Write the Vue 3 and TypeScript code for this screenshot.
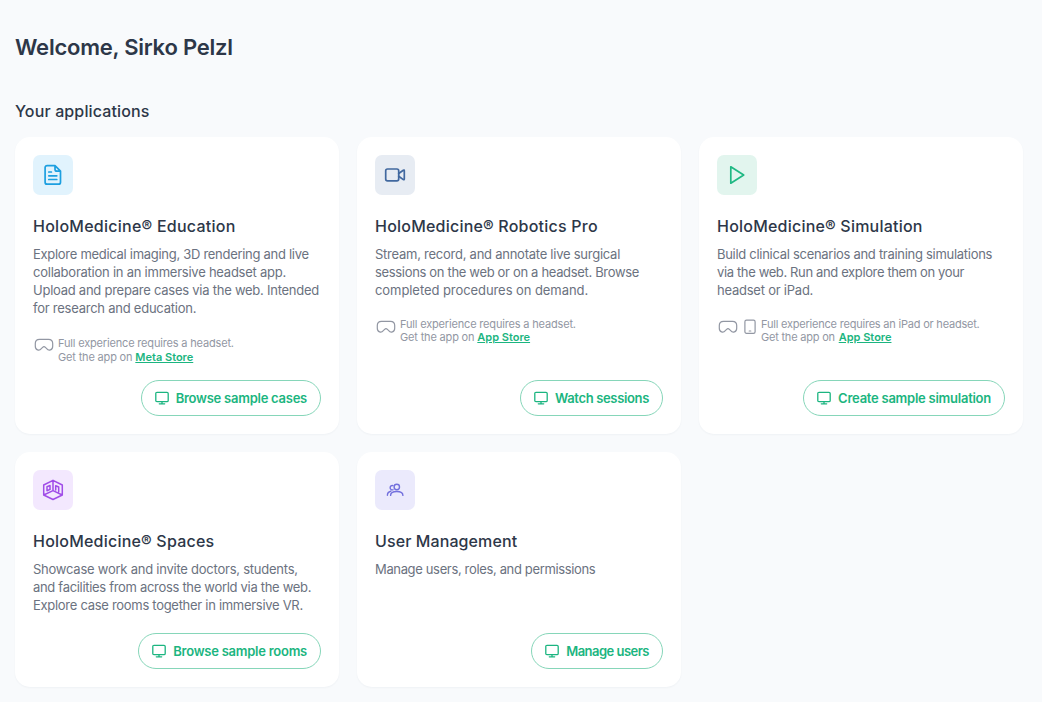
<script setup lang="ts">
type IconName = 'document' | 'video' | 'play' | 'spaces' | 'users'

interface Line {
  text: string
  tracking: number
}

interface AppCard {
  id: string
  icon: IconName
  title: string
  lines: Line[]
  note?: { text: string; store: string; tablet: boolean }
  action: string
}

const cards: AppCard[] = [
  {
    id: 'education',
    icon: 'document',
    title: 'HoloMedicine® Education',
    lines: [
      { text: 'Explore medical imaging, 3D rendering and live', tracking: -0.29 },
      { text: 'collaboration in an immersive headset app.', tracking: -0.24 },
      { text: 'Upload and prepare cases via the web. Intended', tracking: -0.25 },
      { text: 'for research and education.', tracking: -0.24 },
    ],
    note: { text: 'Full experience requires a headset.', store: 'Meta Store', tablet: false },
    action: 'Browse sample cases',
  },
  {
    id: 'robotics',
    icon: 'video',
    title: 'HoloMedicine® Robotics Pro',
    lines: [
      { text: 'Stream, record, and annotate live surgical', tracking: -0.25 },
      { text: 'sessions on the web or on a headset. Browse', tracking: -0.33 },
      { text: 'completed procedures on demand.', tracking: -0.07 },
    ],
    note: { text: 'Full experience requires a headset.', store: 'App Store', tablet: false },
    action: 'Watch sessions',
  },
  {
    id: 'simulation',
    icon: 'play',
    title: 'HoloMedicine® Simulation',
    lines: [
      { text: 'Build clinical scenarios and training simulations', tracking: -0.29 },
      { text: 'via the web. Run and explore them on your', tracking: -0.37 },
      { text: 'headset or iPad.', tracking: -0.23 },
    ],
    note: { text: 'Full experience requires an iPad or headset.', store: 'App Store', tablet: true },
    action: 'Create sample simulation',
  },
  {
    id: 'spaces',
    icon: 'spaces',
    title: 'HoloMedicine® Spaces',
    lines: [
      { text: 'Showcase work and invite doctors, students,', tracking: -0.24 },
      { text: 'and facilities from across the world via the web.', tracking: -0.31 },
      { text: 'Explore case rooms together in immersive VR.', tracking: -0.29 },
    ],
    action: 'Browse sample rooms',
  },
  {
    id: 'management',
    icon: 'users',
    title: 'User Management',
    lines: [{ text: 'Manage users, roles, and permissions', tracking: -0.35 }],
    action: 'Manage users',
  },
]
</script>

<template>
  <main class="page">
    <h1 class="welcome">Welcome, Sirko Pelzl</h1>
    <h2 class="section">Your applications</h2>
    <div class="grid">
      <article v-for="card in cards" :key="card.id" class="card" :class="card.id">
        <div class="badge">
          <svg v-if="card.icon === 'document'" width="24" height="24" viewBox="0 0 24 24">
            <path d="M14 2.600H6.100a2 2 0 0 0-2 2v14.600a2 2 0 0 0 2 2h11.400a2 2 0 0 0 2-2V8.100L14 2.600v3.600a2 2 0 0 0 2 2h3.500M7.800 9h2.600M7.800 12.800h8M7.800 16.500h8" />
          </svg>
          <svg v-else-if="card.icon === 'video'" width="24" height="24" viewBox="0 0 24 24">
            <rect x="2.7" y="6" width="13" height="11.8" rx="1.8" />
            <path d="M15.7 10.500l4.600-3.300q1-.5 1 .6v8.200q0 1.100-1 .6l-4.600-3.300" />
          </svg>
          <svg v-else-if="card.icon === 'play'" width="24" height="24" viewBox="0 0 24 24">
            <path d="M5.800 3.800v16.400L18.700 12z" />
          </svg>
          <svg v-else-if="card.icon === 'spaces'" width="24" height="24" viewBox="0 0 24 24">
            <path d="M12 2.300l9.300 4.700v10L12 21.500 2.700 17V7zM12 2.300v10.300M2.700 17L12 12.600l9.300 4.400M6 8.700l3-1.200v3.900L6 12.700zM14.700 11.900V7.700l3 1.300v4.700" />
          </svg>
          <svg v-else width="24" height="24" viewBox="0 0 24 24">
            <circle cx="13.8" cy="9" r="2.7" />
            <path d="M7.600 17.400c0-5.200 12.300-5.200 12.300 0M10 7.600a2.200 2.200 0 1 0 0 4.200M4.400 17.200c0-2.200 1.300-3.400 3.400-3.900" />
          </svg>
        </div>
        <h3 class="title">{{ card.title }}</h3>
        <p class="description">
          <span
            v-for="line in card.lines"
            :key="line.text"
            class="line"
            :style="{ letterSpacing: line.tracking + 'px' }"
          >{{ line.text }}</span>
        </p>
        <div v-if="card.note" class="note">
          <svg class="headset" width="20" height="14" viewBox="0 0 20 14">
            <path d="M5.500 1.300h9c2.500 0 4.200 1.600 4.200 4.200v2.800c0 4.100-4.100 4.800-6 2.400l-1.300-1.300a2 2 0 0 0-2.800 0l-1.300 1.300c-1.900 2.400-6 1.700-6-2.400V5.500c0-2.600 1.700-4.200 4.200-4.200z" />
          </svg>
          <svg v-if="card.note.tablet" class="tablet" width="12" height="16" viewBox="0 0 12 16">
            <rect x=".9" y="1.1" width="10.200" height="13.300" rx="1.600" />
            <path d="M5.200 12h1.600" />
          </svg>
          <div class="note-text">
            <span class="line">{{ card.note.text }}</span>
            <span class="line">Get the app on <a class="store">{{ card.note.store }}</a></span>
          </div>
        </div>
        <button type="button" class="action">
          <svg width="14" height="14" viewBox="0 0 14 14">
            <path d="M2 1.300h10q1.200 0 1.200 1.200v7q0 1.200-1.200 1.200H2Q.8 10.700.8 9.500v-7Q.8 1.300 2 1.300zM7 10.700v2M4.300 12.800h5.400" />
          </svg>
          <span>{{ card.action }}</span>
        </button>
      </article>
    </div>
  </main>
</template>

<style>
body {
  background: #f8fafc;
}
</style>

<style scoped>
.page {
  box-sizing: border-box;
  height: 702px;
  overflow: hidden;
  padding: 32px 19px 0 15px;
  font-family: Inter, "Noto Sans", sans-serif;
  color: #2d3748;
}

.welcome {
  margin: 0;
  font-size: 22px;
  line-height: 30px;
  font-weight: 600;
  letter-spacing: -0.23px;
}

.section {
  margin: 37px 0 14px;
  font-size: 16px;
  line-height: 24px;
  font-weight: 500;
  letter-spacing: 0.13px;
}

.grid {
  display: grid;
  grid-template-columns: repeat(3, 324px);
  grid-template-rows: 297px 235px;
  gap: 18px;
}

.card {
  box-sizing: border-box;
  display: flex;
  flex-direction: column;
  padding: 18px;
  border-radius: 15px;
  background: #fff;
  box-shadow: 0 1px 2px rgba(30, 50, 80, 0.04);
}

svg {
  display: block;
  flex: none;
  fill: none;
  stroke: currentColor;
  stroke-linecap: round;
  stroke-linejoin: round;
}

.badge {
  display: grid;
  place-items: center;
  flex: none;
  width: 40px;
  height: 40px;
  border-radius: 7px;
  stroke-width: 1.7;
}

.education .badge { color: #1c9fe0; background: #e1f3fd; }
.robotics .badge { color: #41689f; background: #e7ecf3; }
.simulation .badge { color: #1fb883; background: #e2f5ee; }
.spaces .badge { color: #a04de8; background: #f3e8fe; stroke-width: 1.5; }
.management .badge { color: #7370dd; background: #ebeafc; stroke-width: 1.4; }

.title {
  margin: 19px 0 7px;
  font-size: 16px;
  line-height: 24px;
  font-weight: 500;
  letter-spacing: 0.22px;
  white-space: nowrap;
}

.education .title {
  letter-spacing: 0.26px;
}

.management .title {
  letter-spacing: 0.1px;
}

.description {
  margin: 0;
  font-size: 13px;
  line-height: 18px;
  color: #6b7280;
}

.line {
  display: block;
  white-space: nowrap;
}

.note {
  display: flex;
  margin-top: 18px;
  font-size: 11px;
  line-height: 13.5px;
  letter-spacing: -0.17px;
  color: #9297a3;
}

.note-text {
  padding-top: 0.5px;
}

.education .note {
  line-height: 14px;
}

.simulation .note {
  letter-spacing: -0.21px;
}

.headset {
  margin: 3px 4.5px 0 0.5px;
  stroke-width: 1.2;
}

.tablet {
  margin: 2px 5.5px 0 1.5px;
  stroke-width: 1.2;
}

.store {
  font-weight: 600;
  letter-spacing: 0;
  color: #1bb580;
  text-decoration: underline;
}

.simulation .store {
  margin-left: 1px;
}

.action {
  display: flex;
  align-items: center;
  align-self: flex-end;
  gap: 7px;
  box-sizing: border-box;
  height: 36px;
  margin-top: auto;
  padding: 0 13px;
  border: 1px solid #86d6b9;
  border-radius: 18px;
  background: transparent;
  color: #1bb580;
  font-family: inherit;
  font-size: 13px;
  font-weight: 600;
  line-height: 18px;
  letter-spacing: -0.25px;
  white-space: nowrap;
}

.robotics .action {
  letter-spacing: -0.34px;
}

.management .action {
  letter-spacing: -0.52px;
}

.action svg {
  stroke-width: 1.3;
}
</style>
